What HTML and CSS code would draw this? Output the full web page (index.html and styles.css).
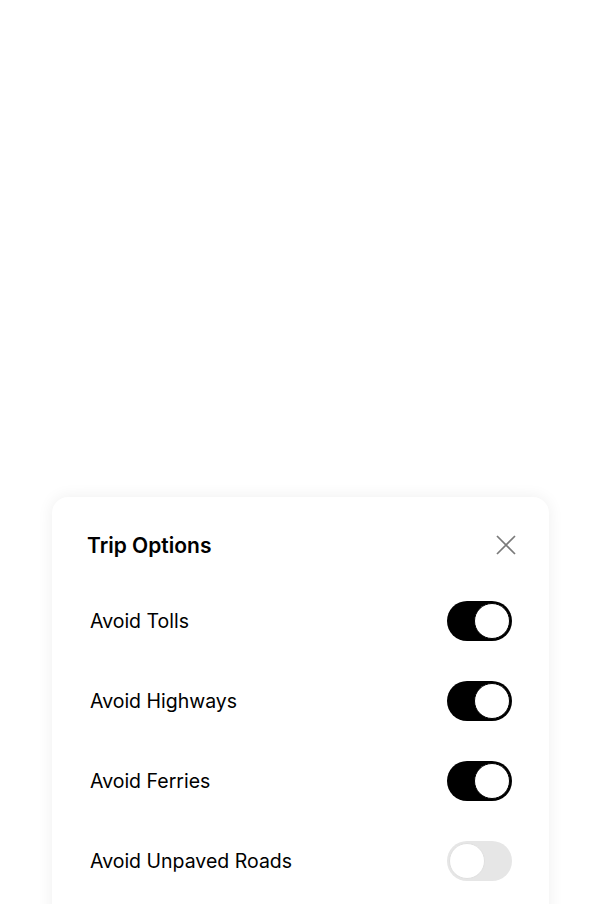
FILE: index.html
```html
<!DOCTYPE html>
<html>
<head>
<meta charset="utf-8">
<link rel="stylesheet" href="styles.css">
</head>
<body>
<div class="page">
  <div class="sheet">
    <div class="header">
      <h1 class="title">Trip Options</h1>
      <button class="close" aria-label="Close">
        <svg width="20" height="20" viewBox="0 0 20 20"><path d="M1 1 L19 19 M19 1 L1 19" stroke="#7a7a7a" stroke-width="1.7" fill="none"/></svg>
      </button>
    </div>
    <div class="row"><span class="label">Avoid Tolls</span><span class="toggle on"><span class="knob"></span></span></div>
    <div class="row"><span class="label">Avoid Highways</span><span class="toggle on"><span class="knob"></span></span></div>
    <div class="row"><span class="label">Avoid Ferries</span><span class="toggle on"><span class="knob"></span></span></div>
    <div class="row"><span class="label">Avoid Unpaved Roads</span><span class="toggle off"><span class="knob"></span></span></div>
  </div>
</div>
</body>
</html>
```
FILE: styles.css
```css
html, body {
  margin: 0;
  padding: 0;
  background: #fff;
  height: 904px;
  overflow: hidden;
}
body {
  font-family: Inter, "Liberation Sans", sans-serif;
  color: #000;
}
.page {
  padding-top: 497px;
  padding-left: 52px;
  padding-right: 51px;
}
.sheet {
  background: #fff;
  border-radius: 16px;
  box-shadow: 0 0 16px rgba(0,0,0,0.07);
  padding: 0 37px 60px 35px;
}
.header {
  display: flex;
  align-items: center;
  justify-content: space-between;
  box-sizing: border-box;
  height: 84px;
  padding-top: 12px;
}
.title {
  margin: 0;
  font-size: 21px;
  font-weight: 600;
  letter-spacing: 0;
}
.close {
  background: none;
  border: none;
  padding: 0;
  margin-right: -4px;
  width: 20px;
  height: 20px;
  display: flex;
}
.row {
  display: flex;
  align-items: center;
  justify-content: space-between;
  height: 80px;
  padding-left: 3px;
}
.label {
  font-size: 19.5px;
  font-weight: 400;
  letter-spacing: 0;
}
.toggle {
  width: 65px;
  height: 40px;
  border-radius: 20px;
  display: flex;
  align-items: center;
  box-sizing: border-box;
  padding: 2px;
}
.toggle.on {
  background: #000;
  justify-content: flex-end;
}
.toggle.off {
  background: #e6e6e6;
  justify-content: flex-start;
}
.knob {
  width: 36px;
  height: 36px;
  border-radius: 50%;
  background: #fff;
  box-sizing: border-box;
}
.toggle.on .knob { border: 1.5px solid #000; }
.toggle.off .knob { border: 1.5px solid #e0e0e0; }
```
